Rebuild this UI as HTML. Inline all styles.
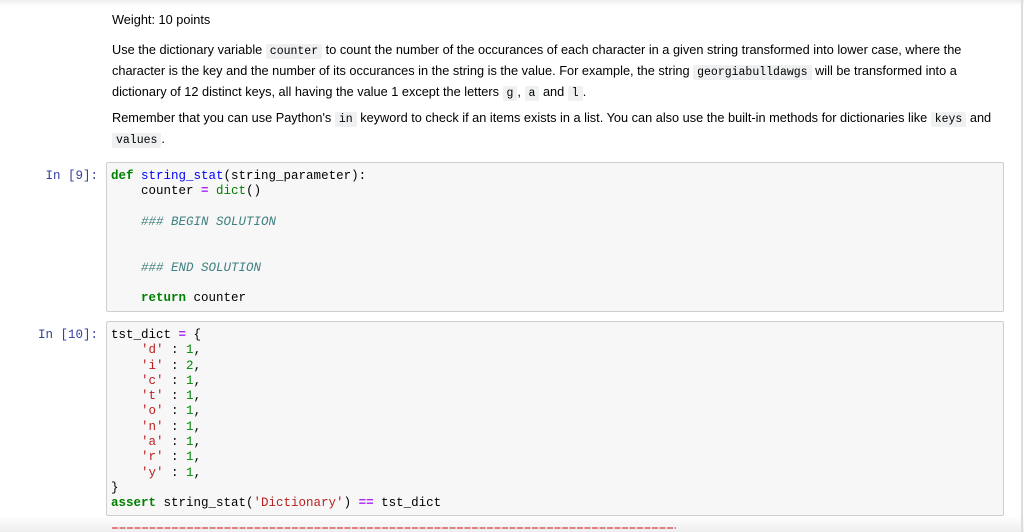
<!DOCTYPE html>
<html><head><meta charset="utf-8"><style>
body{margin:0;width:1024px;height:532px;overflow:hidden;background:#fff;position:relative;font-family:"Liberation Sans",sans-serif;color:#000}
.topshade{position:absolute;left:0;top:0;width:1024px;height:6px;background:linear-gradient(#eee,#fff)}
.rline{position:absolute;left:1021px;top:0;width:2px;height:532px;background:#ddd}
.md{position:absolute;left:112px;font-size:12.75px;line-height:19px;width:880px}
code{font-family:"Liberation Mono",monospace;font-size:11.5px;background:#eff0f1;padding:1px 4px;border-radius:2px}
.box{position:absolute;left:106px;width:896px;background:#f7f7f7;border:1px solid #cfcfcf;border-radius:2px}
pre{margin:0;padding:6px 4px 5px;font-family:"Liberation Mono",monospace;font-size:12.5px;line-height:15.3px;color:#000}
.p{position:absolute;font-family:"Liberation Mono",monospace;font-size:12.5px;color:#303f9f;text-align:right;width:98px;left:0}
.k{color:#008000;font-weight:bold}.f{color:#0000ff}.o{color:#aa22ff;font-weight:bold}.b{color:#008000}
.c{color:#408080;font-style:italic}.s{color:#ba2121}.n{color:#080}
.bshade{position:absolute;left:0;top:516px;width:1024px;height:16px;background:linear-gradient(#fff,#eee)}
.dash{position:absolute;left:112px;top:527px;width:564px;height:2px;background:repeating-linear-gradient(90deg,#e08080 0 6px,transparent 6px 7.5px)}
</style></head><body>
<div class="topshade"></div>
<div class="md" style="top:10px">Weight: 10 points</div>
<div class="md" style="top:40px">Use the dictionary variable <code>counter</code> to count the number of the occurances of each character in a given string transformed into lower case, where the character is the key and the number of its occurances in the string is the value. For example, the string <code>georgiabulldawgs</code> will be transformed into a dictionary of 12 distinct keys, all having the value 1 except the letters <code>g</code>, <code>a</code> and <code>l</code>.</div>
<div class="md" style="top:108px">Remember that you can use Paython's <code>in</code> keyword to check if an items exists in a list. You can also use the built-in methods for dictionaries like <code>keys</code> and <code>values</code>.</div>
<div class="p" style="top:169px">In [9]:</div>
<div class="box" style="top:162px;height:148px"><pre><span class="k">def</span> <span class="f">string_stat</span>(string_parameter):
    counter <span class="o">=</span> <span class="b">dict</span>()

    <span class="c">### BEGIN SOLUTION</span>


    <span class="c">### END SOLUTION</span>

    <span class="k">return</span> counter</pre></div>
<div class="bshade"></div>
<div class="p" style="top:328px">In [10]:</div>
<div class="box" style="top:321px;height:193px"><pre>tst_dict <span class="o">=</span> {
    <span class="s">'d'</span> : <span class="n">1</span>,
    <span class="s">'i'</span> : <span class="n">2</span>,
    <span class="s">'c'</span> : <span class="n">1</span>,
    <span class="s">'t'</span> : <span class="n">1</span>,
    <span class="s">'o'</span> : <span class="n">1</span>,
    <span class="s">'n'</span> : <span class="n">1</span>,
    <span class="s">'a'</span> : <span class="n">1</span>,
    <span class="s">'r'</span> : <span class="n">1</span>,
    <span class="s">'y'</span> : <span class="n">1</span>,
}
<span class="k">assert</span> string_stat(<span class="s">'Dictionary'</span>) <span class="o">==</span> tst_dict</pre></div>
<div class="dash"></div>
<div class="rline"></div>
</body></html>
